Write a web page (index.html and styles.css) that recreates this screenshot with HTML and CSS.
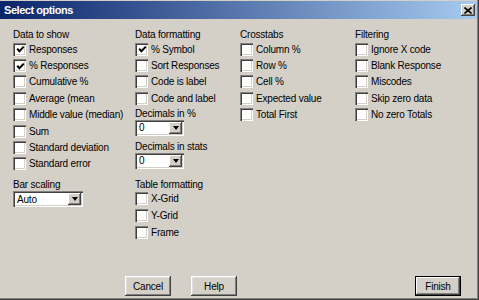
FILE: index.html
```html
<!DOCTYPE html>
<html>
<head>
    <title>Select options</title>
    <link rel="stylesheet" href="styles.css">
</head>
<body>
    <div class="window">
        <div class="titlebar">
            <span class="title">Select options</span>
            <span class="close-btn">
                <svg width="8" height="7" viewBox="0 0 8 7"><path d="M0.5 0.5 L7.5 6.5 M7.5 0.5 L0.5 6.5" stroke="#000" stroke-width="1.6"/></svg>
            </span>
        </div>
        <div class="dialog-body">
            <div class="columns">
                <div class="col col-show">
                    <div class="group-label">Data to show</div>
                    <div class="check"><span class="box checked"><svg width="9" height="9" viewBox="0 0 9 9"><path d="M1.2 3.8 L3.4 6.2 L7.8 1.6" stroke="#000" stroke-width="2" fill="none"/></svg></span>Responses</div>
                    <div class="check"><span class="box checked"><svg width="9" height="9" viewBox="0 0 9 9"><path d="M1.2 3.8 L3.4 6.2 L7.8 1.6" stroke="#000" stroke-width="2" fill="none"/></svg></span>% Responses</div>
                    <div class="check"><span class="box"></span>Cumulative %</div>
                    <div class="check"><span class="box"></span>Average (mean</div>
                    <div class="check"><span class="box"></span>Middle value (median)</div>
                    <div class="check"><span class="box"></span>Sum</div>
                    <div class="check"><span class="box"></span>Standard deviation</div>
                    <div class="check"><span class="box"></span>Standard error</div>

                    <div class="group-label spaced">Bar scaling</div>
                    <div class="select select-wide"><span class="value">Auto</span><span class="arrow"><i></i></span></div>
                </div>

                <div class="col col-format">
                    <div class="group-label">Data formatting</div>
                    <div class="check"><span class="box checked"><svg width="9" height="9" viewBox="0 0 9 9"><path d="M1.2 3.8 L3.4 6.2 L7.8 1.6" stroke="#000" stroke-width="2" fill="none"/></svg></span>% Symbol</div>
                    <div class="check"><span class="box"></span>Sort Responses</div>
                    <div class="check"><span class="box"></span>Code is label</div>
                    <div class="check"><span class="box"></span>Code and label</div>

                    <div class="group-label">Decimals in %</div>
                    <div class="select"><span class="value">0</span><span class="arrow"><i></i></span></div>
                    <div class="group-label small-gap">Decimals in stats</div>
                    <div class="select"><span class="value">0</span><span class="arrow"><i></i></span></div>

                    <div class="group-label table-label">Table formatting</div>
                    <div class="check tall"><span class="box"></span>X-Grid</div>
                    <div class="check tall"><span class="box"></span>Y-Grid</div>
                    <div class="check tall"><span class="box"></span>Frame</div>
                </div>

                <div class="col col-cross">
                    <div class="group-label">Crosstabs</div>
                    <div class="check"><span class="box"></span>Column %</div>
                    <div class="check"><span class="box"></span>Row %</div>
                    <div class="check"><span class="box"></span>Cell %</div>
                    <div class="check"><span class="box"></span>Expected value</div>
                    <div class="check"><span class="box"></span>Total First</div>
                </div>

                <div class="col col-filter">
                    <div class="group-label">Filtering</div>
                    <div class="check"><span class="box"></span>Ignore X code</div>
                    <div class="check"><span class="box"></span>Blank Response</div>
                    <div class="check"><span class="box"></span>Miscodes</div>
                    <div class="check"><span class="box"></span>Skip zero data</div>
                    <div class="check"><span class="box"></span>No zero Totals</div>
                </div>
            </div>

            <div class="buttons">
                <span class="btn">Cancel</span>
                <span class="btn">Help</span>
                <span class="btn btn-default">Finish</span>
            </div>
        </div>
    </div>
</body>
</html>
```

FILE: styles.css
```css
body {
    margin: 0;
    font-family: "Liberation Sans", Arial, sans-serif;
    font-size: 10px;
    letter-spacing: -0.2px;
    color: #000;
    background-color: #d4d0c8;
}
.window {
    width: 479px;
    height: 300px;
    box-sizing: border-box;
    padding-top: 1px;
    background-color: #d4d0c8;
    box-shadow: inset -1px -1px #404040, inset -2px -2px #808080;
    display: flex;
    flex-direction: column;
}
.titlebar {
    height: 18px;
    margin-right: 2px;
    background: linear-gradient(to right, #0a246a, #a6caf0);
    display: flex;
    align-items: center;
    justify-content: space-between;
    padding: 0 2px 0 4px;
}
.title {
    font-weight: bold;
    font-size: 11px;
    letter-spacing: -0.45px;
    color: #fff;
}
.close-btn {
    width: 14px;
    height: 12px;
    box-sizing: border-box;
    background-color: #d4d0c8;
    box-shadow: inset -1px -1px #404040, inset 1px 1px #fff, inset -2px -2px #808080;
    display: flex;
    align-items: center;
    justify-content: center;
    padding-right: 1px;
}
.dialog-body {
    flex: 1;
    display: flex;
    flex-direction: column;
    padding: 9px 18px 4px 13px;
}
.columns {
    display: flex;
}
.col {
    display: flex;
    flex-direction: column;
    white-space: nowrap;
}
.col-show { width: 122px; }
.col-format { width: 105px; }
.col-cross { width: 115px; }
.col-filter { flex: 1; }
.group-label {
    height: 13px;
    line-height: 13px;
}
.group-label.spaced { margin-top: 6px; }
.group-label.small-gap { margin-top: 4px; }
.group-label.table-label { margin-top: 9px; }
.check {
    height: 16.4px;
    display: flex;
    align-items: center;
}
.check.tall { height: 16.8px; }
.box {
    width: 13px;
    height: 13px;
    flex-shrink: 0;
    box-sizing: border-box;
    margin-right: 3px;
    background-color: #fff;
    box-shadow: inset 1px 1px #808080, inset 2px 2px #404040, inset -1px -1px #fff, inset -2px -2px #d4d0c8;
    display: flex;
    align-items: center;
    justify-content: center;
}
.box svg {
    margin-left: 1px;
    margin-top: 1px;
}
.select {
    width: 49px;
    height: 16px;
    box-sizing: border-box;
    background-color: #fff;
    box-shadow: inset 1px 1px #808080, inset 2px 2px #404040, inset -1px -1px #fff, inset -2px -2px #d4d0c8;
    display: flex;
    align-items: center;
    padding: 2px;
}
.select-wide { width: 70px; }
.value {
    flex: 1;
    padding-left: 2px;
}
.arrow {
    width: 13px;
    height: 12px;
    box-sizing: border-box;
    background-color: #d4d0c8;
    box-shadow: inset -1px -1px #404040, inset 1px 1px #fff, inset -2px -2px #808080;
    display: flex;
    align-items: center;
    justify-content: center;
}
.arrow i {
    width: 0;
    height: 0;
    border-left: 3.5px solid transparent;
    border-right: 3.5px solid transparent;
    border-top: 4px solid #000;
}
.buttons {
    margin-top: auto;
    display: flex;
    padding-left: 112px;
}
.btn {
    width: 46px;
    height: 20px;
    box-sizing: border-box;
    margin-right: 20px;
    background-color: #d4d0c8;
    box-shadow: inset -1px -1px #404040, inset 1px 1px #fff, inset -2px -2px #808080, inset 2px 2px #dfdfdf;
    display: flex;
    align-items: center;
    justify-content: center;
}
.btn-default {
    margin-left: auto;
    margin-right: 0;
    border: 1px solid #000;
    box-shadow: inset -1px -1px #404040, inset 1px 1px #fff, inset -2px -2px #808080;
}
```
